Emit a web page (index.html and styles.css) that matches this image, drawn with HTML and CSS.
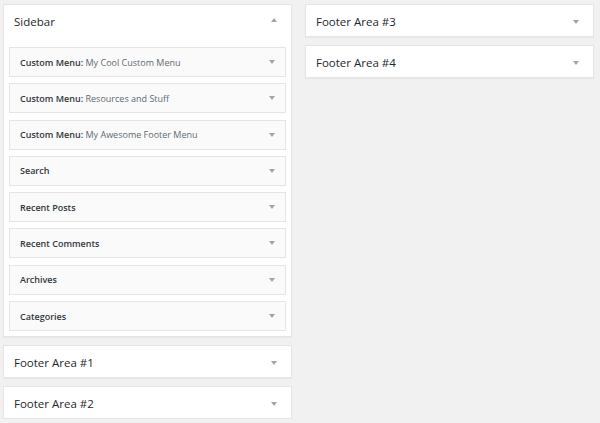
FILE: index.html
```html
<!DOCTYPE html>
<html lang="en">
<head>
    <meta charset="UTF-8">
    <title>Widgets</title>
    <link rel="stylesheet" href="styles.css">
</head>
<body>
    <div class="areas">
        <div class="coluna">
            <div class="area aberta">
                <div class="area-topo">
                    <h2>Sidebar</h2>
                    <span class="seta seta-cima"></span>
                </div>
                <div class="widgets">
                    <div class="widget"><span class="nome">Custom Menu:</span>&nbsp;<span class="titulo">My Cool Custom Menu</span><span class="seta"></span></div>
                    <div class="widget"><span class="nome">Custom Menu:</span>&nbsp;<span class="titulo">Resources and Stuff</span><span class="seta"></span></div>
                    <div class="widget"><span class="nome">Custom Menu:</span>&nbsp;<span class="titulo">My Awesome Footer Menu</span><span class="seta"></span></div>
                    <div class="widget"><span class="nome">Search</span><span class="seta"></span></div>
                    <div class="widget"><span class="nome">Recent Posts</span><span class="seta"></span></div>
                    <div class="widget"><span class="nome">Recent Comments</span><span class="seta"></span></div>
                    <div class="widget"><span class="nome">Archives</span><span class="seta"></span></div>
                    <div class="widget"><span class="nome">Categories</span><span class="seta"></span></div>
                </div>
            </div>
            <div class="area">
                <div class="area-topo"><h2>Footer Area #1</h2><span class="seta"></span></div>
            </div>
            <div class="area">
                <div class="area-topo"><h2>Footer Area #2</h2><span class="seta"></span></div>
            </div>
        </div>
        <div class="coluna">
            <div class="area">
                <div class="area-topo"><h2>Footer Area #3</h2><span class="seta"></span></div>
            </div>
            <div class="area">
                <div class="area-topo"><h2>Footer Area #4</h2><span class="seta"></span></div>
            </div>
        </div>
    </div>
</body>
</html>
```

FILE: styles.css
```css
body {
    margin: 0;
    background-color: #f1f1f1;
    font-family: "Open Sans", "Noto Sans", sans-serif;
    color: #23282d;
}
.areas {
    display: flex;
    gap: 13px;
    padding: 4px 6px 0 3px;
}
.coluna {
    width: 289px;
    display: flex;
    flex-direction: column;
    gap: 8px;
}
.area {
    background-color: #fff;
    border: 1px solid #e5e5e5;
    box-shadow: 0 1px 1px rgba(0, 0, 0, 0.04);
}
.area-topo {
    height: 31px;
    box-sizing: border-box;
    padding: 2px 14px 0 10px;
    display: flex;
    align-items: center;
    justify-content: space-between;
}
.aberta .area-topo {
    height: 41px;
    padding-top: 0;
    align-items: flex-start;
}
.aberta .area-topo h2 {
    margin-top: 9px;
}
.aberta .area-topo .seta {
    margin-top: 13px;
}
.area-topo h2 {
    margin: 0;
    font-size: 11.5px;
    font-weight: 400;
    color: #23282d;
}
.seta {
    width: 0;
    height: 0;
    border-left: 3.5px solid transparent;
    border-right: 3.5px solid transparent;
    border-top: 4px solid #a0a5aa;
}
.seta-cima {
    border-top: none;
    border-bottom: 4px solid #a0a5aa;
}
.widgets {
    padding: 1px 5px 5px;
    display: flex;
    flex-direction: column;
    gap: 6.3px;
}
.widget {
    height: 30px;
    box-sizing: border-box;
    background-color: #fafafa;
    border: 1px solid #e5e5e5;
    display: flex;
    align-items: center;
    padding: 0 10px 0 10px;
    font-size: 9px;
}
.widget .nome {
    font-weight: 600;
    color: #32373c;
}
.widget .titulo {
    color: #606a73;
}
.widget .seta {
    margin-left: auto;
}
```
